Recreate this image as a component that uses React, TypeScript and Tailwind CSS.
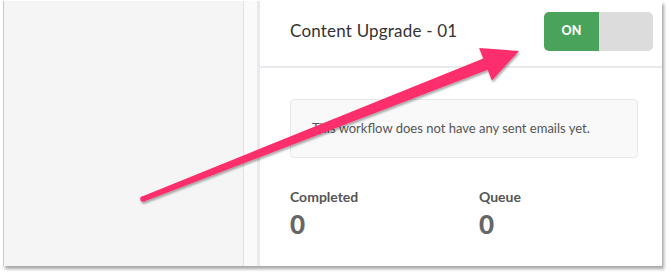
import React from "react";

export default function App() {
  return (
    <div className="relative w-[671px] h-[272px] bg-white overflow-hidden pt-[1px] pl-[3px]" style={{ fontFamily: "Lato, 'Open Sans', sans-serif" }}>
      <div className="flex w-[659px] h-[265px] border-l border-[#c9c9c9] shadow-[2px_3px_3px_rgba(0,0,0,0.35)]">
        <div className="w-[240px] bg-[#f5f5f5] border-r border-[#e2e2e2]" />
        <div className="w-[13px] bg-[#fafafa]" />
        <div className="w-[3px] bg-[#e9eaee]" />
        <div className="flex-1 bg-white flex flex-col">
          <div className="h-[67px] border-b-2 border-[#e9eaee] flex items-center justify-between pl-[30px] pr-[9px] pb-[5px]">
            <div className="text-[17px] text-[#333] tracking-[0.2px]">Content Upgrade - 01</div>
            <div className="flex w-[109px] h-[39px] rounded-[5px] overflow-hidden">
              <div className="w-[55px] bg-[#4aa35a] flex items-center justify-center text-white text-[12.5px] font-black">ON</div>
              <div className="flex-1 bg-[#dcdcdc]" />
            </div>
          </div>
          <div className="pl-[30px] pr-[24px] pt-[31px]">
            <div className="h-[59px] rounded-[4px] border border-[#e8e8e8] bg-[#f9f9f9] flex items-center pl-[21px] text-[13px] text-[#555]">
              This workflow does not have any sent emails yet.
            </div>
            <div className="flex mt-[28px]">
              <div className="w-[189px]">
                <div className="text-[14px] font-bold text-[#555]">Completed</div>
                <div className="text-[26px] font-black text-[#666] leading-[30px] mt-[2px]">0</div>
              </div>
              <div>
                <div className="text-[14px] font-bold text-[#555]">Queue</div>
                <div className="text-[26px] font-black text-[#666] leading-[30px] mt-[2px]">0</div>
              </div>
            </div>
          </div>
        </div>
      </div>
      <svg className="absolute left-0 top-0 pointer-events-none" width="671" height="272" viewBox="0 0 671 272">
        <defs>
          <filter id="sh" x="-10%" y="-10%" width="120%" height="130%">
            <feDropShadow dx="1" dy="2" stdDeviation="1.3" floodColor="#000" floodOpacity="0.35" />
          </filter>
        </defs>
        <g filter="url(#sh)" fill="#fd2d6c">
          <polygon points="142,196.4 483.3,58.6 479.1,47.9 519,51 491.9,80.5 487.7,69.8 144,201.6" />
          <circle cx="143" cy="199" r="2.8" />
        </g>
      </svg>
    </div>
  );
}
